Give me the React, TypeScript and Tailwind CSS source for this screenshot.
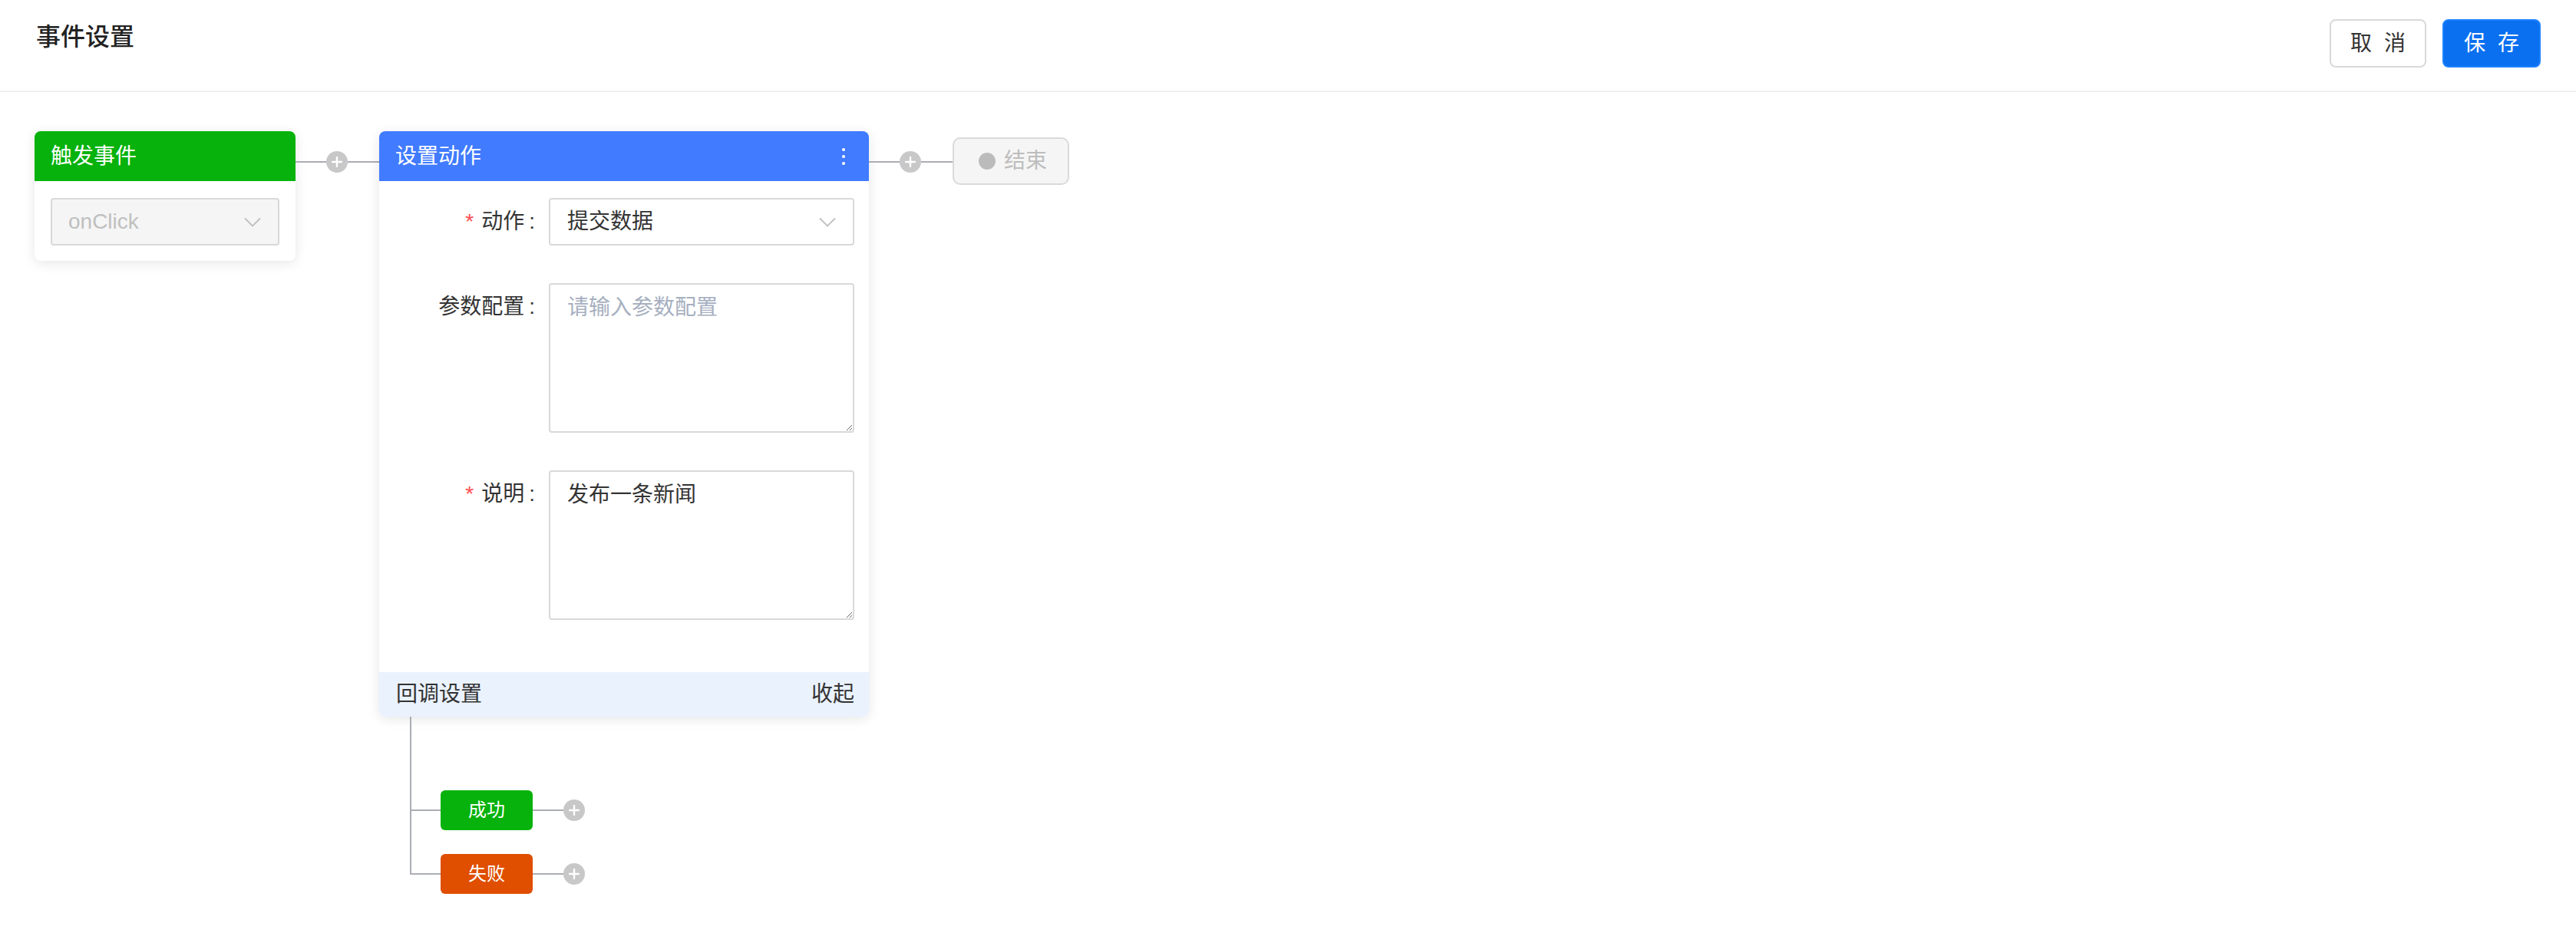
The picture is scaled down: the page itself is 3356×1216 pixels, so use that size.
import React from 'react';

const font = "font-['Liberation_Sans','Noto_Sans_CJK_SC',sans-serif]";

function PlusDot() {
  return (
    <div className="flex h-[28px] w-[28px] shrink-0 items-center justify-center rounded-full bg-[#c8c8c8]">
      <svg width="14" height="14" viewBox="0 0 14 14">
        <path d="M7 1v12M1 7h12" stroke="#fff" strokeWidth="2.4" strokeLinecap="round" />
      </svg>
    </div>
  );
}

function Connector() {
  return (
    <div className="mt-[26px] flex h-[28px] w-[109px] shrink-0 items-center">
      <div className="h-[2px] w-[40px] bg-[#abadb5]" />
      <PlusDot />
      <div className="h-[2px] flex-1 bg-[#abadb5]" />
    </div>
  );
}

function Chevron() {
  return (
    <svg width="22" height="13" viewBox="0 0 22 13" className="shrink-0">
      <path d="M1 1.5l10 10 10-10" stroke="#bfbfbf" strokeWidth="1.8" fill="none" />
    </svg>
  );
}

function Label({ text, required }: { text: string; required?: boolean }) {
  return (
    <div className="flex h-[62px] w-[203px] shrink-0 items-center justify-end text-[28px] text-[#333]">
      {required && <span className="mr-[10px] text-[#ff4d4f]">*</span>}
      <span>{text}</span>
      <span className="ml-[6px]">:</span>
    </div>
  );
}

function TriggerNode() {
  return (
    <div className="w-[340px] shrink-0 rounded-[8px] bg-white shadow-[0_3px_16px_rgba(0,0,0,0.1)]">
      <div className="flex h-[65px] items-center rounded-t-[8px] bg-[#06b20b] pl-[21px] text-[28px] text-white">
        触发事件
      </div>
      <div className="px-[21px] pt-[22px] pb-[20px]">
        <div className="flex h-[62px] items-center justify-between rounded-[4px] border-2 border-[#d9d9d9] bg-[#f5f5f5] pl-[21px] pr-[22px] text-[28px] text-[#bfbfbf]">
          <span>onClick</span>
          <Chevron />
        </div>
      </div>
    </div>
  );
}

function ActionNode() {
  return (
    <div className="w-[638px] shrink-0 rounded-[8px] bg-white shadow-[0_3px_16px_rgba(0,0,0,0.1)]">
      <div className="flex h-[65px] items-center justify-between rounded-t-[8px] bg-[#417bff] pl-[21px] pr-[31px] text-[28px] text-white">
        <span>设置动作</span>
        <div className="flex flex-col gap-[5px]">
          <span className="h-[4px] w-[4px] rounded-full bg-white" />
          <span className="h-[4px] w-[4px] rounded-full bg-white" />
          <span className="h-[4px] w-[4px] rounded-full bg-white" />
        </div>
      </div>

      <div className="flex flex-col gap-[49px] pt-[22px] pr-[19px] pb-[68px]">
        <div className="flex items-start gap-[18px]">
          <Label text="动作" required />
          <div className="flex h-[62px] flex-1 items-center justify-between rounded-[4px] border-2 border-[#d9d9d9] bg-white pl-[22px] pr-[22px] text-[28px] text-[#333]">
            <span>提交数据</span>
            <Chevron />
          </div>
        </div>

        <div className="flex items-start gap-[18px]">
          <Label text="参数配置" />
          <textarea
            placeholder="请输入参数配置"
            className="h-[195px] flex-1 rounded-[4px] border-2 border-[#d9d9d9] px-[22px] pt-[10px] text-[28px] leading-[40px] text-[#333] outline-none placeholder:text-[#a6afc0]"
          />
        </div>

        <div className="flex items-start gap-[18px]">
          <Label text="说明" required />
          <textarea
            defaultValue="发布一条新闻"
            className="h-[195px] flex-1 rounded-[4px] border-2 border-[#d9d9d9] px-[22px] pt-[10px] text-[28px] leading-[40px] text-[#333] outline-none"
          />
        </div>
      </div>

      <div className="flex h-[58px] items-center justify-between rounded-b-[8px] bg-[#eaf2fe] pl-[22px] pr-[19px] text-[28px] text-[#333]">
        <span>回调设置</span>
        <span>收起</span>
      </div>
    </div>
  );
}

function BranchTag({ text, color }: { text: string; color: string }) {
  return (
    <div className="flex items-center">
      <div className={`flex h-[52px] w-[120px] items-center justify-center rounded-[6px] text-[24px] text-white ${color}`}>
        {text}
      </div>
      <div className="h-[2px] w-[40px] bg-[#abadb5]" />
      <PlusDot />
    </div>
  );
}

function Callbacks() {
  return (
    <div className="ml-[40px] w-fit">
      <div className="h-[96px] border-l-2 border-[#abadb5]" />
      <div className="flex items-center border-l-2 border-[#abadb5]">
        <div className="h-[2px] w-[38px] bg-[#abadb5]" />
        <BranchTag text="成功" color="bg-[#06b20b]" />
      </div>
      <div className="h-[31px] border-l-2 border-[#abadb5]" />
      <div className="flex items-start">
        <div className="h-[27px] w-[40px] border-b-2 border-l-2 border-[#abadb5]" />
        <BranchTag text="失败" color="bg-[#e04e00]" />
      </div>
    </div>
  );
}

export default function App() {
  return (
    <div className={`min-h-screen bg-white ${font}`}>
      <div className="flex h-[120px] items-start justify-between border-b-2 border-[#efefef] pl-[47px] pr-[46px]">
        <h1 className="pt-[27px] text-[32px] leading-[42px] font-medium text-[#222]">事件设置</h1>
        <div className="flex gap-[21px] pt-[25px]">
          <button className="h-[63px] w-[126px] rounded-[8px] border-2 border-[#d9d9d9] bg-white pl-[4px] text-[28px] tracking-[4px] text-[#333]">
            取 消
          </button>
          <button className="h-[63px] w-[128px] rounded-[8px] border-2 border-[#1c82ff] bg-[#0a70f0] pl-[4px] text-[28px] tracking-[4px] text-white">
            保 存
          </button>
        </div>
      </div>

      <div className="flex items-start pt-[51px] pl-[45px]">
        <TriggerNode />
        <Connector />
        <div className="flex flex-col">
          <ActionNode />
          <Callbacks />
        </div>
        <Connector />
        <div className="mt-[8px] flex h-[62px] w-[152px] items-center gap-[11px] rounded-[10px] border-2 border-[#dadada] bg-[#f5f5f5] pl-[32px] text-[28px] text-[#bdbdbd]">
          <span className="h-[22px] w-[22px] rounded-full bg-[#bbbbbb]" />
          <span>结束</span>
        </div>
      </div>
    </div>
  );
}
